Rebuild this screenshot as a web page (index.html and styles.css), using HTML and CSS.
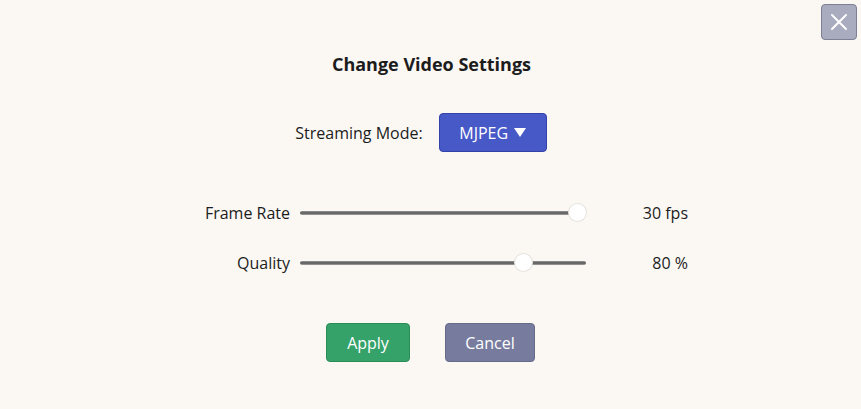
FILE: index.html
```html
<!DOCTYPE html>
<html>
<head>
<meta charset="utf-8">
<link rel="stylesheet" href="styles.css">
</head>
<body>
<div class="page">
  <button class="close" aria-label="Close">
    <svg width="18" height="18" viewBox="0 0 18 18"><path d="M2 2L16 16M16 2L2 16" stroke="#fff" stroke-width="2" stroke-linecap="round"/></svg>
  </button>
  <h1 class="title">Change Video Settings</h1>
  <div class="mode-row">
    <span class="mode-label">Streaming Mode:</span>
    <button class="mode-btn">MJPEG <span class="caret"></span></button>
  </div>
  <div class="sliders">
    <span class="s-label">Frame Rate</span>
    <div class="slider"><div class="track"></div><div class="thumb" style="left: 97%"></div></div>
    <span class="s-value">30 fps</span>
    <span class="s-label">Quality</span>
    <div class="slider"><div class="track"></div><div class="thumb" style="left: 78%"></div></div>
    <span class="s-value">80 %</span>
  </div>
  <div class="actions">
    <button class="btn apply">Apply</button>
    <button class="btn cancel">Cancel</button>
  </div>
</div>
</body>
</html>
```
FILE: styles.css
```css
html, body {
  margin: 0;
  padding: 0;
  background: #fbf8f4;
  font-family: "Open Sans", "Noto Sans", sans-serif;
  color: #1c1c1c;
}
.page {
  position: relative;
  width: 861px;
  height: 409px;
  display: flex;
  flex-direction: column;
  align-items: center;
}
.close {
  position: absolute;
  top: 4px;
  right: 4px;
  width: 36px;
  height: 36px;
  border: 1px solid #7d7f94;
  border-radius: 4px;
  background: #a9abbe;
  padding: 0;
  display: flex;
  align-items: center;
  justify-content: center;
}
.title {
  margin: 50px 0 0;
  font-size: 18px;
  font-weight: 700;
  line-height: 28px;
  margin-left: 2px;
}
.mode-row {
  margin-top: 35px;
  display: flex;
  align-items: center;
  gap: 16px;
  margin-left: -19px;
}
.mode-label {
  font-size: 16px;
}
.mode-btn {
  width: 108px;
  height: 39px;
  border: 1px solid #3342a8;
  border-radius: 4px;
  background: #4758c7;
  color: #fff;
  font-family: inherit;
  font-size: 16px;
  display: flex;
  align-items: center;
  justify-content: center;
  gap: 6px;
}
.caret {
  width: 0;
  height: 0;
  border-left: 6px solid transparent;
  border-right: 6px solid transparent;
  border-top: 9px solid #fff;
}
.sliders {
  margin-top: 49px;
  align-self: flex-start;
  margin-left: 190px;
  display: grid;
  grid-template-columns: 100px 296px 102px;
  row-gap: 26px;
  align-items: center;
  font-size: 16px;
}
.s-label {
  text-align: right;
  line-height: 24px;
}
.slider {
  position: relative;
  height: 24px;
  margin-left: 10px;
}
.track {
  position: absolute;
  left: 0;
  right: 0;
  top: 10px;
  height: 4px;
  border-radius: 2px;
  background: linear-gradient(#9a9a9a, #555 50%, #a5a5a5);
}
.thumb {
  position: absolute;
  top: 3px;
  width: 17px;
  height: 17px;
  margin-left: -8px;
  border-radius: 50%;
  background: #fff;
  box-shadow: 0 0 0 1px #e6e2de;
}
.s-value {
  text-align: right;
  line-height: 24px;
}
.actions {
  margin-top: 48px;
  display: flex;
  gap: 35px;
}
.btn {
  height: 39px;
  border-radius: 4px;
  color: #fff;
  font-family: inherit;
  font-size: 16px;
  padding: 0;
}
.apply {
  width: 84px;
  background: #35a26a;
  border: 1px solid #2b8c58;
}
.cancel {
  width: 90px;
  background: #777c9e;
  border: 1px solid #666b8a;
}
```
